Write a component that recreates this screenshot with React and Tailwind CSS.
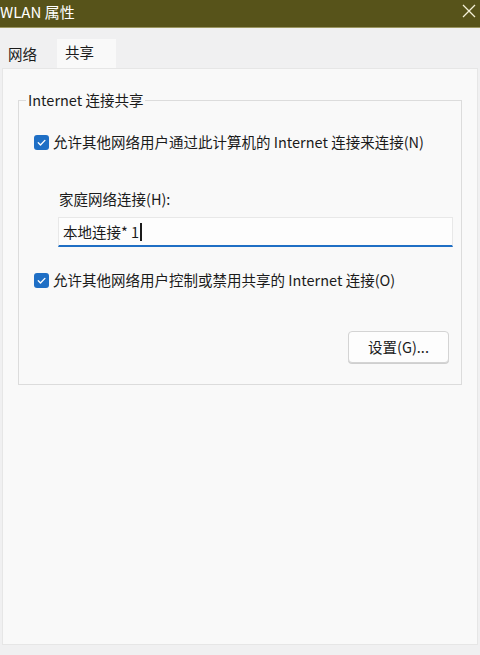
import React from 'react';

const font = { fontFamily: '"Noto Sans CJK SC", "Noto Sans", sans-serif' };

const Check = () => (
  <span className="flex h-[15px] w-[15px] shrink-0 items-center justify-center rounded-[3px] bg-[#1f6fc5]">
    <svg width="11" height="11" viewBox="0 0 12 12" fill="none" stroke="white" strokeWidth="1.5" strokeLinecap="round" strokeLinejoin="round">
      <path d="M2.5 6.3l2.4 2.4 4.8-5" />
    </svg>
  </span>
);

export default function App() {
  return (
    <div className="flex h-[655px] w-[480px] flex-col overflow-hidden bg-[#f0f0f1] text-[#1b1b1b]" style={font}>
      {/* Title bar */}
      <div className="flex h-[28px] shrink-0 items-center justify-between border-b border-[#9b9660] bg-[#57531a] pr-[4px]">
        <span className="-mt-[4px] text-[15px] leading-none text-white">WLAN 属性</span>
        <svg width="14" height="14" viewBox="0 0 14 14" stroke="#f4f1d8" strokeWidth="1.3" className="-mt-[6px]">
          <path d="M1 1l12 12M13 1L1 13" />
        </svg>
      </div>

      {/* Tabs */}
      <div className="mt-[11px] flex h-[29px] shrink-0 items-end text-[14.5px]">
        <div className="flex h-[27px] w-[57px] items-center pl-[8px] pb-[2px]">网络</div>
        <div className="flex h-[29px] w-[59px] items-center bg-[#f9f9f9] pl-[8px] pb-[4px]">共享</div>
      </div>

      {/* Panel */}
      <div className="mx-[2px] mb-[10px] flex-1 border border-[#e6e6e6] bg-[#f9f9f9] px-[15px] pt-[31px]">
        <div className="relative h-[285px] border border-[#dcdcdc]">
          <span className="absolute -top-[11px] left-[7px] bg-[#f9f9f9] px-[2px] text-[14.5px] leading-[20px]">Internet 连接共享</span>

          <div className="mt-[31px] ml-[15px] flex h-[20px] items-center gap-[4px] text-[14.5px]">
            <Check />
            <span>允许其他网络用户通过此计算机的 Internet 连接来连接(N)</span>
          </div>

          <div className="ml-[40px] mt-[37px] text-[14.5px] leading-[20px]">家庭网络连接(H):</div>

          <div className="ml-[39px] mr-[8px] mt-[8px] flex h-[30px] items-center border border-[#e8e8e8] border-b-2 border-b-[#1f6fc5] bg-[#fdfdfd] pl-[4px] text-[14.5px]">
            <span>本地连接* 1</span>
            <span className="ml-[1px] h-[18px] w-[1.5px] bg-[#1b1b1b]" />
          </div>

          <div className="mt-[23px] ml-[15px] flex h-[20px] items-center gap-[4px] text-[14.5px]">
            <Check />
            <span>允许其他网络用户控制或禁用共享的 Internet 连接(O)</span>
          </div>

          <div className="mt-[41px] mr-[12px] flex justify-end">
            <div className="flex h-[32px] w-[101px] items-center justify-center rounded-[4px] border border-[#d4d4d4] bg-[#fdfdfd] text-[14.5px] shadow-[0_1px_0_#cfcfcf]">
              设置(G)...
            </div>
          </div>
        </div>
      </div>
    </div>
  );
}
